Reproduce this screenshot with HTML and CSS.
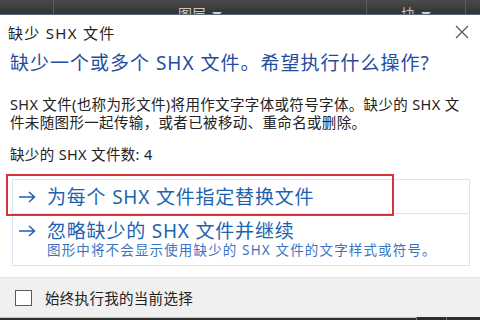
FILE: index.html
```html
<!DOCTYPE html>
<html lang="zh-CN">
<head>
<meta charset="utf-8">
<link rel="stylesheet" href="styles.css">
</head>
<body>
<div class="screen">
  <div class="topbar">
    <div class="tb-cell tb-first"></div>
    <div class="tb-cell tb-layer"><span>图层</span><span class="caret"></span></div>
    <div class="tb-cell tb-block"><span>块</span><span class="caret"></span></div>
    <div class="tb-cell tb-last"></div>
  </div>
  <div class="dialog">
    <div class="titlebar">
      <span class="title">缺少 SHX 文件</span>
      <svg class="close" width="14" height="14" viewBox="0 0 14 14"><path d="M1 1L13 13M13 1L1 13" stroke="#555" stroke-width="1.2" fill="none"/></svg>
    </div>
    <div class="content">
      <div class="heading">缺少一个或多个 SHX 文件。希望执行什么操作?</div>
      <p class="desc">SHX 文件(也称为形文件)将用作文字字体或符号字体。缺少的 SHX 文件未随图形一起传输，或者已被移动、重命名或删除。</p>
      <p class="count">缺少的 SHX 文件数: 4</p>
      <div class="options">
        <div class="opt opt-first">
          <svg class="arrow" width="18" height="12" viewBox="0 0 18 12"><path d="M1 6H16.5M11 1L16.5 6L11 11" stroke="currentColor" stroke-width="1.5" fill="none"/></svg>
          <span class="opt-main">为每个 SHX 文件指定替换文件</span>
        </div>
        <div class="opt opt-second">
          <div class="opt-line">
            <svg class="arrow" width="18" height="12" viewBox="0 0 18 12"><path d="M1 6H16.5M11 1L16.5 6L11 11" stroke="currentColor" stroke-width="1.5" fill="none"/></svg>
            <span class="opt-main">忽略缺少的 SHX 文件并继续</span>
          </div>
          <div class="opt-sub">图形中将不会显示使用缺少的 SHX 文件的文字样式或符号。</div>
        </div>
        <div class="highlight"></div>
      </div>
    </div>
    <div class="footer">
      <span class="checkbox"></span>
      <span class="footer-label">始终执行我的当前选择</span>
    </div>
  </div>
  <div class="bottombar">
    <div class="bb-blue"></div>
    <div class="bb-seg"></div>
    <div class="bb-seg"></div>
  </div>
</div>
</body>
</html>
```

FILE: styles.css
```css
* { box-sizing: border-box; }
html, body { margin: 0; padding: 0; }
body {
  width: 480px;
  height: 320px;
  overflow: hidden;
  font-family: "Noto Sans", "Noto Sans CJK SC", sans-serif;
  background: #2e2e2e;
}
.screen {
  width: 480px;
  height: 320px;
  display: flex;
  flex-direction: column;
}
.topbar {
  height: 15px;
  display: flex;
  overflow: hidden;
  background: linear-gradient(#4a4a4a, #333);
  border-bottom: 1px solid #5b6a78;
}
.tb-cell {
  border-right: 1px solid #5e5e5e;
  color: #c8c8c8;
  font-size: 14px;
  line-height: 22px;
  padding-top: 3px;
  display: flex;
  justify-content: center;
  gap: 6px;
}
.tb-first { width: 54px; }
.tb-layer { width: 313px; padding-right: 20px; }
.tb-block { width: 99px; }
.tb-last { flex: 1; border-right: none; }
.caret {
  width: 0; height: 0;
  margin-top: 9px;
  border-left: 5px solid transparent;
  border-right: 5px solid transparent;
  border-top: 5px solid #d0d0d0;
}
.dialog {
  height: 302px;
  background: #fff;
  display: flex;
  flex-direction: column;
}
.titlebar {
  height: 34px;
  display: flex;
  align-items: center;
  justify-content: space-between;
  padding: 0 11px 0 8px;
}
.title {
  font-size: 15px;
  letter-spacing: 1.3px;
  color: #222;
}
.close { display: block; }
.content {
  padding: 0 10px;
}
.heading {
  margin-top: 1px;
  font-size: 19px;
  line-height: 26px;
  letter-spacing: 1px;
  color: #1f4c9e;
}
.desc {
  margin: 19px 0 0;
  font-size: 14.5px;
  line-height: 18px;
  letter-spacing: 0.35px;
  color: #222;
}
.count {
  margin: 14px 0 0;
  font-size: 14.5px;
  line-height: 18px;
  letter-spacing: 0.35px;
  color: #222;
}
.options {
  position: relative;
  margin: 16px 0 0 2px;
  width: 458px;
  border: 1px solid #d9e5f0;
}
.opt {
  padding-left: 5px;
  color: #1b63b0;
}
.opt-first {
  height: 34px;
  display: flex;
  align-items: center;
  border-bottom: 1px solid #d9e5f0;
}
.opt-second {
  padding-top: 6px;
  padding-bottom: 7px;
}
.opt-line {
  display: flex;
  align-items: center;
  height: 22px;
}
.arrow {
  display: block;
  margin-right: 11px;
  flex: none;
}
.opt-main {
  font-size: 19px;
  line-height: 22px;
  letter-spacing: 0.8px;
}
.opt-sub {
  padding-left: 29px;
  font-size: 13.5px;
  line-height: 16px;
  letter-spacing: 1.15px;
  color: #3a73c2;
}
.highlight {
  position: absolute;
  left: -7px;
  top: -6px;
  width: 388px;
  height: 42px;
  border: 2px solid #d8333a;
}
.footer {
  margin-top: auto;
  height: 40px;
  background: #f0f0f0;
  border-top: 1px solid #e4e4e4;
  display: flex;
  align-items: center;
  padding-left: 15px;
}
.checkbox {
  width: 17px;
  height: 16px;
  border: 1px solid #5a5a5a;
  background: #fff;
}
.footer-label {
  margin-left: 13px;
  font-size: 14.5px;
  letter-spacing: 0.3px;
  color: #222;
}
.bottombar {
  height: 3px;
  display: flex;
  background: #2e2e2e;
}
.bb-blue {
  width: 416px;
  border-top: 1px solid #a8cde6;
}
.bb-seg {
  width: 30px;
  border-left: 1px solid #777;
}
```
